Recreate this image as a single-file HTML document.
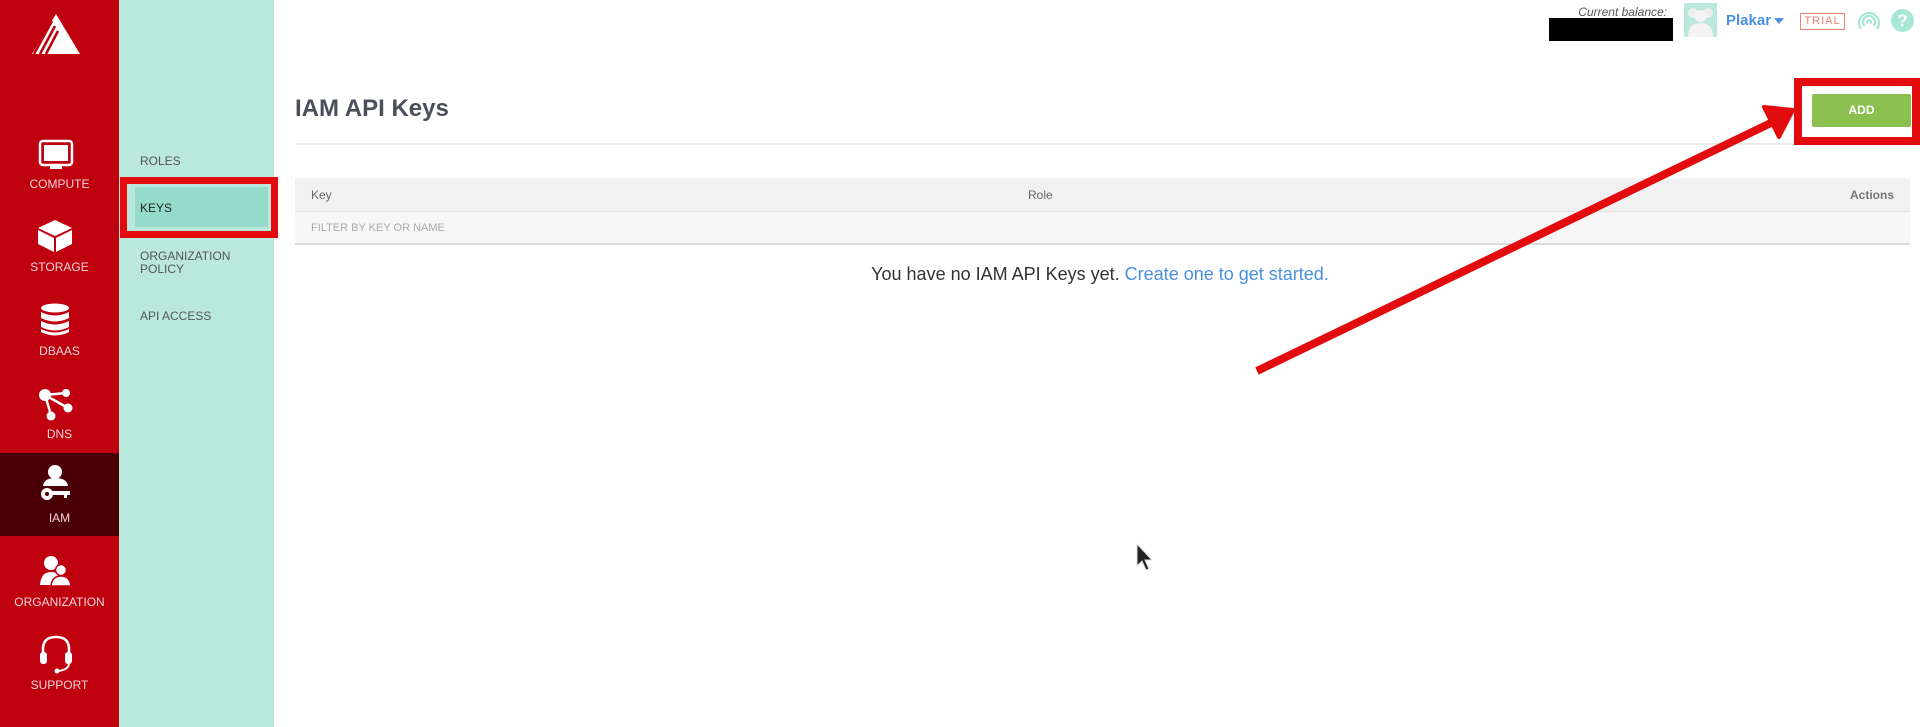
<!DOCTYPE html>
<html><head><meta charset="utf-8"><style>
*{margin:0;padding:0;box-sizing:border-box}
body{width:1920px;height:727px;overflow:hidden;background:#fff;font-family:"Liberation Sans",sans-serif;position:relative}
.abs{position:absolute}
#side{left:0;top:0;width:119px;height:727px;background:#be000f}
#sub{left:119px;top:0;width:155px;height:727px;background:#bae8dd}
.nl{position:absolute;width:119px;text-align:center;color:#f4d6d8;font-size:12px;left:0}
.sl{position:absolute;left:140px;color:#555;font-size:12px;line-height:13px}
</style></head><body>
<div id="side" class="abs"></div>
<div id="sub" class="abs"></div>
<!-- logo -->
<svg class="abs" style="left:30px;top:12px" width="52" height="44" viewBox="0 0 52 44">
<polygon points="26,2 50,42 2,42" fill="#fff"/>
<path d="M22,9 L4,42 M25,14 L10,42 M28,19 L16,42" stroke="#be000f" stroke-width="2.5"/>
</svg>
<!-- compute -->
<svg class="abs" style="left:38px;top:139px" width="36" height="32" viewBox="0 0 36 32"><rect x="2" y="2" width="32" height="24" rx="3" fill="none" stroke="#fff" stroke-width="2.5"/><rect x="6" y="6" width="24" height="16" fill="#fff"/><rect x="12" y="27" width="12" height="3" fill="#fff"/></svg>
<div class="nl" style="top:177px">COMPUTE</div>
<svg class="abs" style="left:37px;top:219px" width="36" height="34" viewBox="0 0 36 34"><polygon points="18,1 35,9 18,17 1,9" fill="#fff"/><polygon points="1,11 17,19 17,33 1,25" fill="#fff"/><polygon points="19,19 35,11 35,25 19,33" fill="#fff"/></svg>
<div class="nl" style="top:260px">STORAGE</div>
<svg class="abs" style="left:39px;top:303px" width="32" height="34" viewBox="0 0 32 34"><ellipse cx="16" cy="5" rx="14" ry="4.5" fill="#fff"/><path d="M2,9 Q16,16 30,9 V15 Q16,22 2,15Z M2,18 Q16,25 30,18 V24 Q16,31 2,24Z M2,26 Q16,33 30,26 V29 Q16,36 2,29Z" fill="#fff"/></svg>
<div class="nl" style="top:344px">DBAAS</div>
<svg class="abs" style="left:38px;top:388px" width="36" height="34" viewBox="0 0 36 34"><path d="M7,7 L28,5 M7,7 L13,27 M7,7 L30,20" stroke="#fff" stroke-width="2.5"/><circle cx="7" cy="7" r="6" fill="#fff"/><circle cx="28" cy="5" r="4" fill="#fff"/><circle cx="30" cy="20" r="4.5" fill="#fff"/><circle cx="13" cy="28" r="4.5" fill="#fff"/></svg>
<div class="nl" style="top:427px">DNS</div>
<div class="abs" style="left:0;top:453px;width:119px;height:83px;background:#4a0006"></div>
<svg class="abs" style="left:40px;top:464px" width="32" height="38" viewBox="0 0 32 38"><circle cx="15" cy="8" r="7" fill="#fff"/><path d="M3,22 Q4,14 15,14 Q27,14 28,22Z" fill="#fff"/><circle cx="7" cy="30" r="6" fill="#fff"/><circle cx="7" cy="30" r="2" fill="#4a0006"/><path d="M11,27 H30 V31 H27 V34 H24 V31 H11Z" fill="#fff"/></svg>
<div class="nl" style="top:511px">IAM</div>
<svg class="abs" style="left:38px;top:555px" width="34" height="32" viewBox="0 0 34 32"><circle cx="13" cy="8" r="7" fill="#fff"/><path d="M2,30 Q3,17 13,17 Q19,17 21,20 L16,30Z" fill="#fff"/><circle cx="23" cy="15" r="5.5" fill="#fff" stroke="#be000f" stroke-width="1.5"/><path d="M13,31 Q14,21 23,21 Q32,21 33,31Z" fill="#fff" stroke="#be000f" stroke-width="1.5"/></svg>
<div class="nl" style="top:595px">ORGANIZATION</div>
<svg class="abs" style="left:39px;top:634px" width="34" height="40" viewBox="0 0 34 40"><path d="M4,20 V15 Q4,3 17,3 Q30,3 30,15 V20" fill="none" stroke="#fff" stroke-width="2.5"/><rect x="1" y="18" width="7" height="12" rx="3" fill="#fff"/><rect x="26" y="18" width="7" height="12" rx="3" fill="#fff"/><path d="M30,30 Q29,36 19,37" fill="none" stroke="#fff" stroke-width="2"/><circle cx="18" cy="37" r="2.5" fill="#fff"/></svg>
<div class="nl" style="top:678px">SUPPORT</div>
<!-- sub nav -->
<div class="sl" style="top:155px">ROLES</div>
<div class="abs" style="left:120px;top:177px;width:158px;height:61px;border:7px solid #e20c0f"></div>
<div class="abs" style="left:135px;top:187px;width:133px;height:40px;background:#94dcc9"></div>
<div class="sl" style="top:202px;color:#222">KEYS</div>
<div class="sl" style="top:250px">ORGANIZATION<br>POLICY</div>
<div class="sl" style="top:310px">API ACCESS</div>
<!-- top bar -->
<div class="abs" style="right:253px;top:5px;font-size:12px;font-style:italic;color:#555">Current balance:</div>
<div class="abs" style="left:1549px;top:18px;width:124px;height:23px;background:#000"></div>
<div class="abs" style="left:1684px;top:3px;width:33px;height:34px;background:#bae8dd;overflow:hidden"><svg width="33" height="34"><circle cx="9" cy="10" r="5" fill="#eee"/><circle cx="24" cy="10" r="5" fill="#eee"/><circle cx="16.5" cy="13" r="6" fill="#f4f4f4"/><path d="M4,34 Q4,20 16.5,20 Q29,20 29,34Z" fill="#f4f4f4"/></svg></div>
<div class="abs" style="left:1726px;top:12px;font-size:15px;font-weight:bold;color:#4a90e2">Plakar</div>
<div class="abs" style="left:1774px;top:18px;width:0;height:0;border-left:5px solid transparent;border-right:5px solid transparent;border-top:6px solid #4a90e2"></div>
<div class="abs" style="left:1800px;top:13px;width:45px;height:17px;border:1.5px solid #f08070;color:#f08070;font-size:11px;text-align:center;line-height:14px;letter-spacing:1px">TRIAL</div>
<svg class="abs" style="left:1856px;top:8px" width="26" height="24" viewBox="0 0 26 24"><g fill="none" stroke="#a8e6d6" stroke-width="2.2"><path d="M5,21 A10,10 0 1 1 21,21"/><path d="M8.5,18 A6,6 0 1 1 17.5,18"/><path d="M11.5,15.5 A2,2 0 1 1 14.5,15.5"/></g></svg>
<div class="abs" style="left:1891px;top:9px;width:23px;height:23px;border-radius:50%;background:#a8e6d6;color:#fff;font-weight:bold;font-size:17px;text-align:center;line-height:23px">?</div>
<!-- title -->
<div class="abs" style="left:295px;top:95px;font-size:24px;font-weight:bold;color:#4a4f5a">IAM API Keys</div>
<div class="abs" style="left:295px;top:143px;width:1615px;height:2px;background:#ececec"></div>
<!-- add -->
<div class="abs" style="left:1794px;top:78px;width:126px;height:67px;border:8px solid #e20c0f"></div>
<div class="abs" style="left:1812px;top:94px;width:99px;height:33px;background:#8bc050;border-radius:2px;color:#fff;font-size:12px;font-weight:bold;text-align:center;line-height:33px">ADD</div>
<!-- table -->
<div class="abs" style="left:295px;top:178px;width:1615px;height:34px;background:#f1f1f1;border-bottom:1px solid #e2e2e2"></div>
<div class="abs" style="left:311px;top:188px;font-size:12px;color:#666">Key</div>
<div class="abs" style="left:1028px;top:188px;font-size:12px;color:#666">Role</div>
<div class="abs" style="right:26px;top:188px;font-size:12px;color:#777;font-weight:bold">Actions</div>
<div class="abs" style="left:295px;top:212px;width:1615px;height:33px;background:#f7f7f7;border-bottom:2px solid #dcdcdc"></div>
<div class="abs" style="left:311px;top:222px;font-size:11px;color:#aaa">FILTER BY KEY OR NAME</div>
<div class="abs" style="left:0;width:2200px;top:264px;text-align:center;font-size:18px;color:#333">You have no IAM API Keys yet. <span style="color:#4a90e2">Create one to get started.</span></div>
<!-- arrow -->
<svg class="abs" style="left:0;top:0" width="1920" height="727"><line x1="1257" y1="371" x2="1775" y2="121" stroke="#e20c0f" stroke-width="8"/><polygon points="1793,110 1764,107 1779,137" fill="#e20c0f" stroke="#e20c0f" stroke-width="4" stroke-linejoin="round"/>
<path d="M1137,544 V566 L1142,561 L1146,570 L1149,569 L1145,560 L1152,560Z" fill="#222" stroke="#ddd" stroke-width="1"/></svg>
</body></html>
